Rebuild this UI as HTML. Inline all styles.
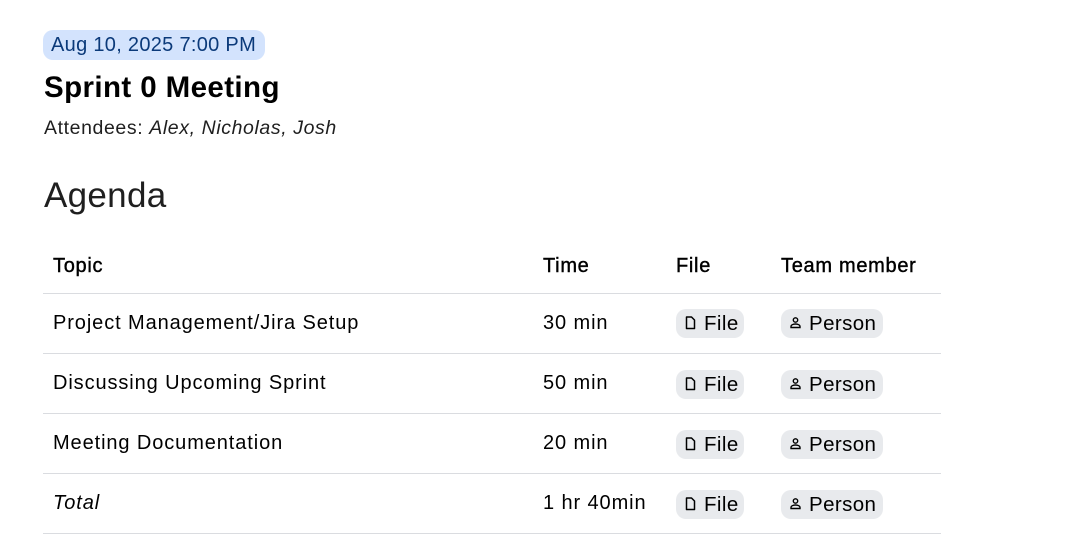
<!DOCTYPE html>
<html><head><meta charset="utf-8"><style>
*{margin:0;padding:0;box-sizing:border-box}
body{width:1068px;height:547px;background:#fff;font-family:"Liberation Sans",sans-serif;color:#1f1f1f;position:relative;overflow:hidden}
.a{position:absolute;white-space:nowrap}
.date{left:43px;top:30px;height:30px;width:222px;background:#d3e3fd;color:#0b3a7a;border-radius:10px;font-size:20px;line-height:30px;padding-left:8px;letter-spacing:0.3px}
.title{left:44px;top:70px;font-size:29.5px;font-weight:bold;color:#000;line-height:36px;letter-spacing:0.4px}
.att{left:44px;top:116px;font-size:19.5px;line-height:24px;letter-spacing:0.6px}
.ag{left:44px;top:176px;font-size:35px;line-height:40px;color:#1f1f1f;letter-spacing:0.3px}
.line{position:absolute;left:43px;width:898px;height:1px;background:#dadce0}
.c{position:absolute;font-size:20px;line-height:24px;color:#000;white-space:nowrap;letter-spacing:0.9px}
.h{color:#000;-webkit-text-stroke:0.4px #000;letter-spacing:0.7px}
.chip{position:absolute;height:29px;background:#e8eaed;border-radius:10px;font-size:20.5px;line-height:30px;color:#000;white-space:nowrap;letter-spacing:0.4px}
.chip svg{position:absolute}
</style></head><body>
<div class="a date">Aug 10, 2025 7:00 PM</div>
<div class="a title">Sprint 0 Meeting</div>
<div class="a att">Attendees: <i>Alex, Nicholas, Josh</i></div>
<div class="a ag">Agenda</div>

<div class="c h" style="left:53px;top:254px">Topic</div>
<div class="c h" style="left:543px;top:254px">Time</div>
<div class="c h" style="left:676px;top:254px">File</div>
<div class="c h" style="left:781px;top:254px">Team member</div>
<div class="line" style="top:293px"></div>

<div class="c" style="left:53px;top:311px">Project Management/Jira Setup</div>
<div class="c" style="left:543px;top:311px">30 min</div>
<div class="line" style="top:353px"></div>
<div class="c" style="left:53px;top:371px">Discussing Upcoming Sprint</div>
<div class="c" style="left:543px;top:371px">50 min</div>
<div class="line" style="top:413px"></div>
<div class="c" style="left:53px;top:431px">Meeting Documentation</div>
<div class="c" style="left:543px;top:431px">20 min</div>
<div class="line" style="top:473px"></div>
<div class="c" style="left:53px;top:491px"><i>Total</i></div>
<div class="c" style="left:543px;top:491px">1 hr 40min</div>
<div class="line" style="top:533px"></div>

<div class="chip" style="left:676px;top:309px;width:68px"><svg style="left:9px;top:7px" width="11" height="14" viewBox="0 0 11 14"><path d="M1.5 1h5l3 3v8.5h-8z" fill="none" stroke="#000" stroke-width="1.5" stroke-linejoin="round"/></svg><span style="position:absolute;left:28px">File</span></div>
<div class="chip" style="left:781px;top:309px;width:102px"><svg style="left:8px;top:8px" width="13" height="12" viewBox="0 0 13 12"><circle cx="6.5" cy="3" r="2.2" fill="none" stroke="#000" stroke-width="1.4"/><path d="M2 10.5v-1c0-1.5 2-2.5 4.5-2.5s4.5 1 4.5 2.5v1z" fill="none" stroke="#000" stroke-width="1.4"/></svg><span style="position:absolute;left:28px">Person</span></div>

<div class="chip" style="left:676px;top:370px;width:68px"><svg style="left:9px;top:7px" width="11" height="14" viewBox="0 0 11 14"><path d="M1.5 1h5l3 3v8.5h-8z" fill="none" stroke="#000" stroke-width="1.5" stroke-linejoin="round"/></svg><span style="position:absolute;left:28px">File</span></div>
<div class="chip" style="left:781px;top:370px;width:102px"><svg style="left:8px;top:8px" width="13" height="12" viewBox="0 0 13 12"><circle cx="6.5" cy="3" r="2.2" fill="none" stroke="#000" stroke-width="1.4"/><path d="M2 10.5v-1c0-1.5 2-2.5 4.5-2.5s4.5 1 4.5 2.5v1z" fill="none" stroke="#000" stroke-width="1.4"/></svg><span style="position:absolute;left:28px">Person</span></div>

<div class="chip" style="left:676px;top:430px;width:68px"><svg style="left:9px;top:7px" width="11" height="14" viewBox="0 0 11 14"><path d="M1.5 1h5l3 3v8.5h-8z" fill="none" stroke="#000" stroke-width="1.5" stroke-linejoin="round"/></svg><span style="position:absolute;left:28px">File</span></div>
<div class="chip" style="left:781px;top:430px;width:102px"><svg style="left:8px;top:8px" width="13" height="12" viewBox="0 0 13 12"><circle cx="6.5" cy="3" r="2.2" fill="none" stroke="#000" stroke-width="1.4"/><path d="M2 10.5v-1c0-1.5 2-2.5 4.5-2.5s4.5 1 4.5 2.5v1z" fill="none" stroke="#000" stroke-width="1.4"/></svg><span style="position:absolute;left:28px">Person</span></div>

<div class="chip" style="left:676px;top:490px;width:68px"><svg style="left:9px;top:7px" width="11" height="14" viewBox="0 0 11 14"><path d="M1.5 1h5l3 3v8.5h-8z" fill="none" stroke="#000" stroke-width="1.5" stroke-linejoin="round"/></svg><span style="position:absolute;left:28px">File</span></div>
<div class="chip" style="left:781px;top:490px;width:102px"><svg style="left:8px;top:8px" width="13" height="12" viewBox="0 0 13 12"><circle cx="6.5" cy="3" r="2.2" fill="none" stroke="#000" stroke-width="1.4"/><path d="M2 10.5v-1c0-1.5 2-2.5 4.5-2.5s4.5 1 4.5 2.5v1z" fill="none" stroke="#000" stroke-width="1.4"/></svg><span style="position:absolute;left:28px">Person</span></div>
</body></html>
